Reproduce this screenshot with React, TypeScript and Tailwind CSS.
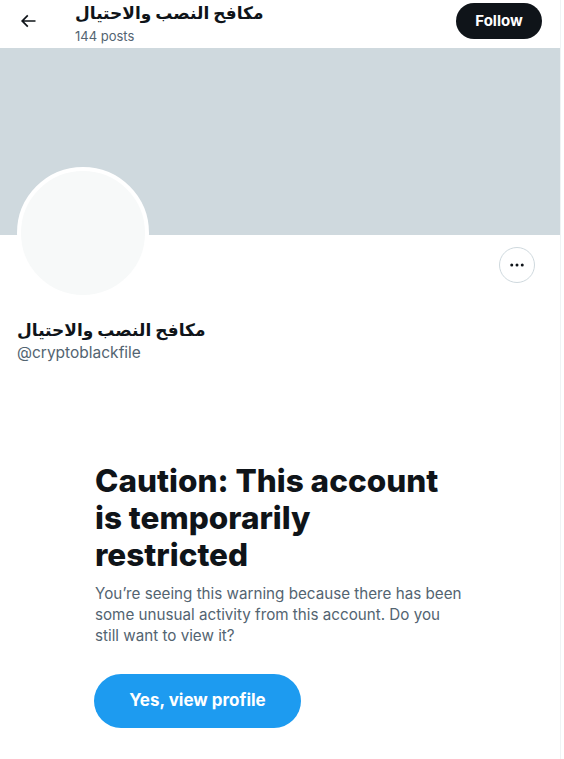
import React from "react";

export default function App() {
  const font = { fontFamily: 'Inter, "DejaVu Sans", sans-serif' };
  return (
    <div className="w-[564px] h-[759px] bg-white overflow-hidden" style={font}>
      <div className="w-[561px] h-full border-r border-[#eff3f4]">
        {/* Header */}
        <div className="flex h-12 items-start">
          <div className="w-[75px] pl-[18px] pt-[11px]">
            <svg viewBox="0 0 24 24" className="w-5 h-5" fill="#0f1419">
              <path d="M7.414 13l5.043 5.04-1.414 1.42L3.586 12l7.457-7.46 1.414 1.42L7.414 11H21v2H7.414z" />
            </svg>
          </div>
          <div className="flex-1 flex flex-col">
            <div className="text-[17px] font-bold leading-6 text-[#0f1419] mt-[1px]">مكافح النصب والاحتيال</div>
            <div className="text-[13px] leading-4 text-[#536471] mt-[3px]">144 posts</div>
          </div>
          <button className="mt-[3px] mr-[18px] h-9 w-[86px] rounded-full bg-[#0f1419] text-white font-bold text-[15px]">
            Follow
          </button>
        </div>
        {/* Banner */}
        <div className="h-[187px] w-[560px] bg-[#cfd9de]" />
        {/* Profile */}
        <div className="flex justify-between items-start pl-[17px] pr-[25px]">
          <div className="-mt-[68px] w-[132px] h-[132px] rounded-full border-4 border-white bg-[#f7f9f9]" />
          <button className="mt-[12px] w-9 h-9 rounded-full border border-[#cfd9de] flex items-center justify-center">
            <svg viewBox="0 0 24 24" className="w-[18px] h-[18px]" fill="#0f1419">
              <circle cx="5" cy="12" r="2" />
              <circle cx="12" cy="12" r="2" />
              <circle cx="19" cy="12" r="2" />
            </svg>
          </button>
        </div>
        <div className="pl-[17px] mt-[19px]">
          <div className="text-[17px] font-bold leading-6 text-[#0f1419]">مكافح النصب والاحتيال</div>
          <div className="text-[15.5px] leading-5 text-[#536471] mt-[1px]">@cryptoblackfile</div>
        </div>
        {/* Caution */}
        <div className="ml-[95px] w-[372px] mt-[99px]">
          <div className="text-[31.5px] leading-[37px] font-extrabold text-[#0f1419] w-[350px]">
            Caution: This account is temporarily restricted
          </div>
          <div className="text-[15.2px] leading-[21px] text-[#536471] mt-[10px] w-[370px]">
            You’re seeing this warning because there has been some unusual activity from this account. Do you still want to view it?
          </div>
          <button className="mt-[28px] h-[54px] w-[207px] -ml-px rounded-full bg-[#1d9bf0] text-white font-bold text-[17px]">
            Yes, view profile
          </button>
        </div>
      </div>
    </div>
  );
}
